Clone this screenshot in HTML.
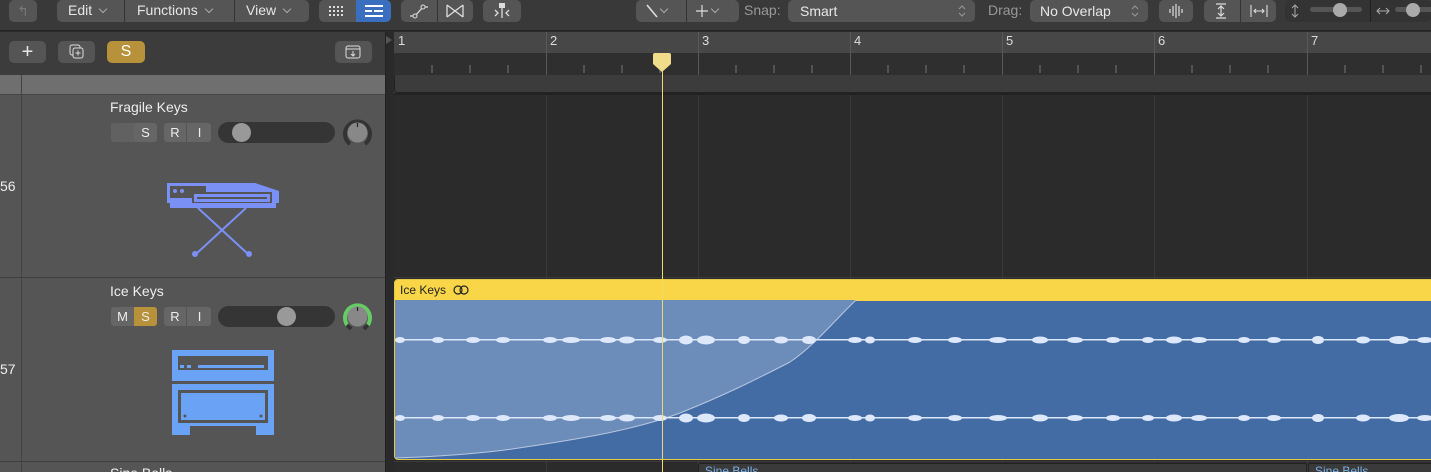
<!DOCTYPE html><html><head><style>
*{box-sizing:border-box;margin:0;padding:0}
html,body{width:1431px;height:472px;overflow:hidden}
body{background:#2b2b2b;font-family:"Liberation Sans",sans-serif;position:relative;color:#ddd}
.a{position:absolute}
.btn{position:absolute;background:#555;border-radius:5px;height:22px;color:#e8e8e8;font-size:14px;line-height:22px}
.tb{font-size:14px;color:#e6e6e6;line-height:20px}
.cv{display:inline-block;width:6px;height:6px;border-right:1.3px solid #aaa;border-bottom:1.3px solid #aaa;transform:rotate(45deg);margin-left:8px;vertical-align:3px}
.ud{position:absolute;right:9px;top:4px;width:8px;height:14px}
.ms{position:absolute;height:19px;background:#666;border-radius:3px;color:#eee;font-size:13px;line-height:19px;text-align:center}
</style></head><body>
<!-- toolbar -->
<div class="a" style="left:0;top:0;width:1431px;height:31px;background:#393939;border-bottom:1px solid #222"></div>
<div class="btn" style="left:9px;top:0;width:28px;text-align:center;color:#777">↰</div>
<div class="btn" style="left:57px;top:0;width:252px"></div>
<div class="a tb" style="left:68px;top:0">Edit<span class="cv"></span></div>
<div class="a" style="left:124px;top:0;width:1px;height:22px;background:#333"></div>
<div class="a tb" style="left:137px;top:0">Functions<span class="cv"></span></div>
<div class="a" style="left:234px;top:0;width:1px;height:22px;background:#333"></div>
<div class="a tb" style="left:246px;top:0">View<span class="cv"></span></div>
<div class="btn" style="left:319px;top:0;width:72px"></div>
<div class="a" style="left:356px;top:0;width:35px;height:22px;background:#3a6fc0;border-radius:0 5px 5px 0"></div>
<svg class="a" style="left:328px;top:5px" width="16" height="12"><g fill="#ddd"><rect x="1" y="1" width="2" height="2"/><rect x="5" y="1" width="2" height="2"/><rect x="9" y="1" width="2" height="2"/><rect x="13" y="1" width="2" height="2"/><rect x="1" y="5" width="2" height="2"/><rect x="5" y="5" width="2" height="2"/><rect x="9" y="5" width="2" height="2"/><rect x="13" y="5" width="2" height="2"/><rect x="1" y="9" width="2" height="2"/><rect x="5" y="9" width="2" height="2"/><rect x="9" y="9" width="2" height="2"/><rect x="13" y="9" width="2" height="2"/></g></svg>
<svg class="a" style="left:365px;top:5px" width="18" height="12"><g fill="#fff"><rect x="0" y="0" width="18" height="2"/><rect x="0" y="5" width="7" height="2"/><rect x="9" y="5" width="9" height="2"/><rect x="0" y="10" width="18" height="2"/></g></svg>
<div class="btn" style="left:401px;top:0;width:72px"></div>
<div class="a" style="left:437px;top:0;width:1px;height:22px;background:#333"></div>
<svg class="a" style="left:408px;top:3px" width="22" height="16"><path d="M2 13h5l8-9h5" stroke="#ddd" fill="none" stroke-width="1.3"/><circle cx="7" cy="13" r="2" fill="#555" stroke="#ddd"/><circle cx="15" cy="4" r="2" fill="#555" stroke="#ddd"/></svg>
<svg class="a" style="left:445px;top:3px" width="20" height="16"><path d="M2 2v12M18 2v12M2 2l16 12M2 14L18 2" stroke="#ddd" fill="none" stroke-width="1.3"/></svg>
<div class="btn" style="left:483px;top:0;width:38px"></div>
<svg class="a" style="left:492px;top:2px" width="20" height="18"><path d="M10 3v13M3 8l3 3-3 3M17 8l-3 3 3 3" stroke="#ddd" fill="none" stroke-width="1.3"/><rect x="7" y="1" width="6" height="5" fill="#ddd"/></svg>
<div class="btn" style="left:636px;top:0;width:103px"></div>
<div class="a" style="left:686px;top:0;width:1px;height:22px;background:#333"></div>
<svg class="a" style="left:645px;top:3px" width="14" height="16"><path d="M2 2l10 12" stroke="#ddd" stroke-width="1.6"/></svg><span class="cv a" style="left:653px;top:6px"></span>
<svg class="a" style="left:695px;top:3px" width="14" height="16"><path d="M7 2v12M1 8h12" stroke="#ddd" stroke-width="1.2"/></svg><span class="cv a" style="left:704px;top:6px"></span>
<div class="a tb" style="left:744px;top:0;color:#999">Snap:</div>
<div class="btn" style="left:788px;top:0;width:187px;padding-left:12px">Smart<svg class="ud" viewBox="0 0 8 14"><path d="M1 5l3-3 3 3M1 9l3 3 3-3" stroke="#999" fill="none"/></svg></div>
<div class="a tb" style="left:988px;top:0;color:#999">Drag:</div>
<div class="btn" style="left:1030px;top:0;width:118px;padding-left:10px">No Overlap<svg class="ud" viewBox="0 0 8 14"><path d="M1 5l3-3 3 3M1 9l3 3 3-3" stroke="#999" fill="none"/></svg></div>
<div class="btn" style="left:1159px;top:0;width:34px"></div>
<svg class="a" style="left:1168px;top:3px" width="16" height="16"><path d="M2 6v4M5 3v10M8 1v14M11 3v10M14 6v4" stroke="#ddd" stroke-width="1.2"/></svg>
<div class="btn" style="left:1204px;top:0;width:72px"></div>
<div class="a" style="left:1240px;top:0;width:1px;height:22px;background:#333"></div>
<svg class="a" style="left:1214px;top:3px" width="14" height="16"><path d="M2 1h10M2 15h10M7 3v10M4 6l3-3 3 3M4 10l3 3 3-3" stroke="#ddd" fill="none" stroke-width="1.2"/></svg>
<svg class="a" style="left:1250px;top:3px" width="18" height="16"><path d="M1 2v12M17 2v12M4 8h10M6 6l-2 2 2 2M12 6l2 2-2 2" stroke="#ddd" fill="none" stroke-width="1.1"/></svg>
<div class="btn" style="left:1285px;top:0;width:146px;background:#333"></div>
<svg class="a" style="left:1290px;top:3px" width="10" height="16"><path d="M5 2v12M2 5l3-3 3 3M2 11l3 3 3-3" stroke="#aaa" fill="none"/></svg>
<div class="a" style="left:1310px;top:7px;width:52px;height:5px;background:#555;border-radius:3px"></div>
<div class="a" style="left:1333px;top:3px;width:14px;height:14px;background:#aaa;border-radius:50%"></div>
<div class="a" style="left:1370px;top:0;width:1px;height:22px;background:#222"></div>
<svg class="a" style="left:1375px;top:3px" width="16" height="16"><path d="M2 8h12M5 5l-3 3 3 3M11 5l3 3-3 3" stroke="#aaa" fill="none"/></svg>
<div class="a" style="left:1395px;top:7px;width:40px;height:5px;background:#555;border-radius:3px"></div>
<div class="a" style="left:1406px;top:3px;width:14px;height:14px;background:#aaa;border-radius:50%"></div>

<!-- left panel -->
<div class="a" style="left:0;top:32px;width:385px;height:43px;background:#3c3c3c"></div>
<div class="btn" style="left:9px;top:41px;width:37px;text-align:center;font-size:20px">+</div>
<div class="btn" style="left:58px;top:41px;width:37px"></div>
<svg class="a" style="left:69px;top:44px" width="16" height="16"><rect x="1" y="1" width="10" height="10" rx="2" fill="none" stroke="#ddd"/><rect x="4" y="4" width="10" height="10" rx="2" fill="#555" stroke="#ddd"/><path d="M9 6.5v5M6.5 9h5" stroke="#ddd"/></svg>
<div class="btn" style="left:107px;top:41px;width:38px;background:#b8923a;text-align:center;font-size:16px;color:#fff">S</div>
<div class="btn" style="left:335px;top:41px;width:37px"></div>
<svg class="a" style="left:345px;top:45px" width="16" height="14"><rect x="1" y="1" width="14" height="12" rx="2" fill="none" stroke="#ddd"/><path d="M1 4h14M8 6v5M6 9l2 2 2-2" stroke="#ddd" fill="none"/></svg>
<div class="a" style="left:0;top:75px;width:385px;height:20px;background:#6f6f6f;border-bottom:1px solid #444"></div>
<div class="a" style="left:0;top:95px;width:385px;height:377px;background:#555"></div>
<div class="a" style="left:21px;top:75px;width:1px;height:397px;background:#444"></div>
<div class="a" style="left:0;top:277px;width:385px;height:1px;background:#3f3f3f"></div>
<div class="a" style="left:0;top:461px;width:385px;height:1px;background:#3f3f3f"></div>
<div class="a" style="left:0;top:178px;font-size:14px;color:#eee">56</div>
<div class="a" style="left:0;top:361px;font-size:14px;color:#eee">57</div>
<div class="a" style="left:110px;top:99px;font-size:14px;color:#eee">Fragile Keys</div>
<div class="a" style="left:110px;top:283px;font-size:14px;color:#eee">Ice Keys</div>
<div class="a" style="left:110px;top:465px;font-size:14px;color:#eee">Sine Bells</div>
<!-- track 1 controls -->
<div class="ms" style="left:111px;top:123px;width:46px;background:#616161"></div>
<div class="ms" style="left:134px;top:123px;width:23px;background:#666">S</div>
<div class="ms" style="left:164px;top:123px;width:47px"></div>
<div class="a" style="left:164px;top:123px;width:23px;height:19px;color:#eee;font-size:13px;text-align:center;line-height:19px;border-right:1px solid #555">R</div>
<div class="a" style="left:188px;top:123px;width:23px;height:19px;color:#eee;font-size:13px;text-align:center;line-height:19px">I</div>
<div class="a" style="left:218px;top:122px;width:117px;height:21px;background:#353535;border-radius:11px"></div>
<div class="a" style="left:232px;top:123px;width:19px;height:19px;background:#999;border-radius:50%"></div>
<svg class="a" style="left:342px;top:117px" width="31" height="31"><path d="M8 27A12.5 12.5 0 1 1 23 27" stroke="#333" stroke-width="4" fill="none"/><circle cx="15.5" cy="15.5" r="10" fill="#888"/><path d="M15.5 6v4" stroke="#222" stroke-width="1.2"/></svg>
<!-- track 2 controls -->
<div class="ms" style="left:111px;top:307px;width:23px;border-radius:3px 0 0 3px">M</div>
<div class="ms" style="left:134px;top:307px;width:23px;background:#b8923a;border-radius:0 3px 3px 0">S</div>
<div class="ms" style="left:164px;top:307px;width:47px"></div>
<div class="a" style="left:164px;top:307px;width:23px;height:19px;color:#eee;font-size:13px;text-align:center;line-height:19px;border-right:1px solid #555">R</div>
<div class="a" style="left:188px;top:307px;width:23px;height:19px;color:#eee;font-size:13px;text-align:center;line-height:19px">I</div>
<div class="a" style="left:218px;top:306px;width:117px;height:21px;background:#353535;border-radius:11px"></div>
<div class="a" style="left:277px;top:307px;width:19px;height:19px;background:#999;border-radius:50%"></div>
<svg class="a" style="left:342px;top:301px" width="31" height="31"><path d="M7 26A12.5 12.5 0 1 1 24 26" stroke="#6c6" stroke-width="4" fill="none"/><path d="M5 24l4 4M26 24l-4 4" stroke="#333" stroke-width="4"/><circle cx="15.5" cy="15.5" r="10" fill="#888"/><path d="M15.5 6v4" stroke="#222" stroke-width="1.2"/></svg>
<!-- keyboard icon -->
<svg class="a" style="left:165px;top:176px" width="114" height="86"><path d="M2 7h88l24 8v12H2z" fill="#7b90f5"/><rect x="5" y="10" width="36" height="12" fill="#555"/><circle cx="10" cy="15" r="2" fill="#7b90f5"/><circle cx="17" cy="15" r="2" fill="#7b90f5"/><rect x="27" y="16" width="80" height="12" fill="#555"/><rect x="29" y="18" width="76" height="8" fill="#7b90f5"/><rect x="32" y="21" width="70" height="2" fill="#555"/><rect x="5" y="27" width="106" height="5" fill="#7b90f5"/><path d="M33 32l50 46M81 32L31 78" stroke="#7b90f5" stroke-width="2"/><circle cx="30" cy="78" r="3" fill="#7b90f5"/><circle cx="84" cy="78" r="3" fill="#7b90f5"/></svg>
<!-- amp icon -->
<svg class="a" style="left:172px;top:350px" width="104" height="88"><g fill="#6aa3f5"><rect x="0" y="0" width="102" height="6"/><rect x="0" y="6" width="6" height="14"/><rect x="96" y="6" width="6" height="14"/><rect x="0" y="20" width="102" height="11"/><rect x="0" y="34" width="102" height="42"/><rect x="0" y="76" width="18" height="9"/><rect x="84" y="76" width="18" height="9"/></g><rect x="6" y="6" width="90" height="14" fill="#555"/><rect x="8" y="15" width="4" height="3" fill="#6aa3f5"/><rect x="15" y="15" width="4" height="3" fill="#6aa3f5"/><rect x="26" y="15" width="66" height="3" fill="#6aa3f5"/><rect x="6" y="40" width="90" height="33" fill="#555"/><rect x="9" y="43" width="84" height="27" fill="#6aa3f5"/><circle cx="13" cy="66" r="1.5" fill="#555"/><circle cx="89" cy="66" r="1.5" fill="#555"/></svg>

<!-- arrange divider -->
<div class="a" style="left:385px;top:32px;width:9px;height:440px;background:#2a2a2a;border-left:1px solid #222"></div>
<!-- ruler -->
<div class="a" style="left:394px;top:32px;width:1037px;height:21px;background:#474747"></div>
<div class="a" style="left:394px;top:53px;width:1037px;height:22px;background:#2f2f2f"></div>
<div class="a" style="left:394px;top:75px;width:1037px;height:20px;background:#3c3c3c;border-bottom:2px solid #222"></div>
<div class="a" style="left:394px;top:75px;width:1040px;height:18px;border:1px solid #222;border-top:none;border-radius:0 0 0 4px"></div>
<svg class="a" style="left:0;top:0" width="1431" height="472">
<g stroke="#5a5a5a" stroke-width="1">
<line x1="546.5" y1="32" x2="546.5" y2="75"/><line x1="698.5" y1="32" x2="698.5" y2="75"/><line x1="850.5" y1="32" x2="850.5" y2="75"/><line x1="1002.5" y1="32" x2="1002.5" y2="75"/><line x1="1154.5" y1="32" x2="1154.5" y2="75"/><line x1="1307.5" y1="32" x2="1307.5" y2="75"/>
</g>
<g stroke="#3a3a3a"><line x1="546.5" y1="95" x2="546.5" y2="472"/><line x1="698.5" y1="95" x2="698.5" y2="472"/><line x1="850.5" y1="95" x2="850.5" y2="472"/><line x1="1002.5" y1="95" x2="1002.5" y2="472"/><line x1="1154.5" y1="95" x2="1154.5" y2="472"/><line x1="1307.5" y1="95" x2="1307.5" y2="472"/><line x1="394" y1="277.5" x2="1431" y2="277.5"/><line x1="394" y1="461.5" x2="1431" y2="461.5"/></g>
<g stroke="#777">
<path d="M432 65v8M470 65v8M508 65v8M584 65v8M622 65v8M660 65v8M736 65v8M774 65v8M812 65v8M888 65v8M926 65v8M964 65v8M1040 65v8M1078 65v8M1116 65v8M1192 65v8M1230 65v8M1268 65v8M1345 65v8M1383 65v8M1421 65v8"/>
</g>
<path d="M386 36l6 4-6 4z" fill="#555"/>
</svg>
<div class="a" style="left:398px;top:33px;font-size:13px;color:#ddd">1</div>
<div class="a" style="left:550px;top:33px;font-size:13px;color:#ddd">2</div>
<div class="a" style="left:702px;top:33px;font-size:13px;color:#ddd">3</div>
<div class="a" style="left:854px;top:33px;font-size:13px;color:#ddd">4</div>
<div class="a" style="left:1006px;top:33px;font-size:13px;color:#ddd">5</div>
<div class="a" style="left:1158px;top:33px;font-size:13px;color:#ddd">6</div>
<div class="a" style="left:1311px;top:33px;font-size:13px;color:#ddd">7</div>

<!-- region -->
<div class="a" style="left:394px;top:279px;width:1045px;height:181px;background:#446ca4;border:1px solid #e6c845;border-radius:4px;overflow:hidden">
<div style="height:21px;background:#f8d648;color:#222;font-size:12px;line-height:21px;padding-left:5px">Ice Keys <svg width="18" height="10" style="vertical-align:-1px;margin-left:4px"><circle cx="5" cy="5" r="4" fill="none" stroke="#222" stroke-width="1.2"/><circle cx="11" cy="5" r="4" fill="none" stroke="#222" stroke-width="1.2"/></svg></div>
</div>
<svg class="a" style="left:395px;top:300px" width="1036" height="159">
<path d="M0 0H461C440 20 420 45 395 62C360 80 330 95 285 113C240 130 180 140 110 150C70 155 30 157 0 158Z" fill="#6c8cb9"/>
<path d="M461 0C440 20 420 45 395 62C360 80 330 95 285 113C240 130 180 140 110 150C70 155 30 157 0 158" stroke="#b8c8e0" fill="none"/>
<g fill="#dde8fa" id="w">
<rect x="0" y="39" width="1036" height="1.5"/>
<ellipse cx="5" cy="40" rx="5" ry="3"/><ellipse cx="43" cy="40" rx="6" ry="3"/><ellipse cx="78" cy="40" rx="7" ry="3"/><ellipse cx="108" cy="40" rx="7" ry="3"/><ellipse cx="155" cy="40" rx="7" ry="3"/><ellipse cx="176" cy="40" rx="9" ry="3"/><ellipse cx="213" cy="40" rx="8" ry="3"/><ellipse cx="232" cy="40" rx="8" ry="3.5"/><ellipse cx="265" cy="40" rx="7" ry="3"/><ellipse cx="291" cy="40" rx="7" ry="4.5"/><ellipse cx="311" cy="40" rx="9" ry="4.5"/><ellipse cx="349" cy="40" rx="6" ry="4"/><ellipse cx="386" cy="40" rx="7" ry="3.5"/><ellipse cx="414" cy="40" rx="7" ry="4"/><ellipse cx="460" cy="40" rx="7" ry="3"/><ellipse cx="475" cy="40" rx="5" ry="3.5"/><ellipse cx="520" cy="40" rx="7" ry="3"/><ellipse cx="560" cy="40" rx="7" ry="3"/><ellipse cx="603" cy="40" rx="9" ry="3"/><ellipse cx="645" cy="40" rx="8" ry="3.5"/><ellipse cx="680" cy="40" rx="8" ry="3"/><ellipse cx="718" cy="40" rx="7" ry="3"/><ellipse cx="753" cy="40" rx="6" ry="3"/><ellipse cx="779" cy="40" rx="8" ry="3.5"/><ellipse cx="804" cy="40" rx="8" ry="3"/><ellipse cx="849" cy="40" rx="6" ry="3"/><ellipse cx="879" cy="40" rx="7" ry="3"/><ellipse cx="923" cy="40" rx="6" ry="4"/><ellipse cx="968" cy="40" rx="7" ry="3.5"/><ellipse cx="1004" cy="40" rx="10" ry="4"/><ellipse cx="1030" cy="40" rx="8" ry="3"/>
</g>
<use href="#w" y="78"/>
</svg>
<!-- sine bells regions -->
<div class="a" style="left:698px;top:463px;width:609px;height:12px;background:#3a3a3a;border:1px solid #222;border-radius:3px;color:#7ab0e8;font-size:12px;padding-left:6px;line-height:14px">Sine Bells</div>
<div class="a" style="left:1308px;top:463px;width:130px;height:12px;background:#3a3a3a;border:1px solid #222;border-radius:3px;color:#7ab0e8;font-size:12px;padding-left:6px;line-height:14px">Sine Bells</div>
<!-- playhead -->
<div class="a" style="left:662px;top:62px;width:1px;height:410px;background:#f0d870"></div>
<svg class="a" style="left:652px;top:53px" width="21" height="20"><path d="M1 2q0-2 2-2h14q2 0 2 2v9l-9 8-9-8z" fill="#f1dc8a"/></svg>
</body></html>
